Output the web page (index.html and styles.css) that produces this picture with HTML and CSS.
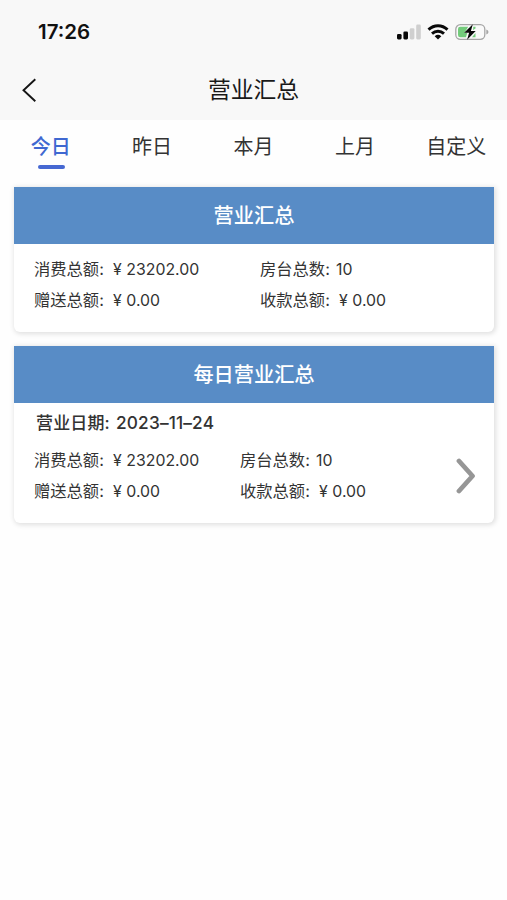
FILE: index.html
```html
<!DOCTYPE html>
<html lang="zh-CN">
<head>
<meta charset="utf-8">
<title>营业汇总</title>
<link rel="stylesheet" href="styles.css">
</head>
<body>
<header class="top">
  <div class="status">
    <span class="time">17:26</span>
    <div class="icons">
      <svg class="signal" width="24" height="16" viewBox="0 0 24 16"><g fill="#090909"><rect x="0" y="10" width="4.600" height="5.400" rx="1.300"/><rect x="6.400" y="7.400" width="4.600" height="8" rx="1.300"/></g><g fill="#cfcfcf"><rect x="12.800" y="4.200" width="4.600" height="11.200" rx="1.300"/><rect x="19.200" y="0.600" width="4.600" height="14.800" rx="1.300"/></g></svg>
      <svg class="wifi" width="22" height="16" viewBox="0 0 22 16" fill="none" stroke="#090909" stroke-width="2.900"><path d="M1.500 5.600C7 .4 15 .4 20.500 5.600"/><path d="M5 9.600C8.500 6.400 13.500 6.400 17 9.600"/><path d="M7.700 12.200Q11 9.500 14.300 12.200L11 15.600Z" fill="#090909" stroke="none"/></svg>
      <svg class="battery" width="34" height="18" viewBox="0 0 34 18"><rect x=".8" y="1.700" width="29" height="14.600" rx="4.500" fill="#fafafa" stroke="#a6a6a6" stroke-width="1.300"/><path d="M5.300 3.700H13.200L9.500 10H12.200L11 14.300H5.300Q3 14.300 3 12V6Q3 3.700 5.300 3.700Z" fill="#73cb7b"/><path d="M18.300 3.700H20.500V5.500L18 7ZM17 14.300L20.500 10V14.300Z" fill="#73cb7b"/><path d="M17.800 1.300L9.200 9.800H14.100L12.100 16.700L20.700 7.900H15.900Z" fill="#090909"/><path d="M31.300 6.500Q33.500 7.200 33.500 9T31.300 11.500Z" fill="#a6a6a6"/></svg>
    </div>
  </div>
  <div class="nav">
    <svg class="back" width="16" height="24" viewBox="0 0 16 24" fill="none" stroke="#151515" stroke-width="1.900"><path d="M13.300 1.300L1.500 12.300L13.300 23.300"/></svg>
    <h1>营业汇总</h1>
  </div>
</header>
<nav class="tabs">
  <a class="tab active">今日</a><a class="tab">昨日</a><a class="tab">本月</a><a class="tab">上月</a><a class="tab">自定义</a>
</nav>
<main>
  <section class="card">
    <h2>营业汇总</h2>
    <div class="grid">
      <div class="row"><span class="label">消费总额:</span><span class="yen">¥</span><span>23202.00</span></div>
      <div class="row"><span class="label">房台总数:</span><span class="count">10</span></div>
      <div class="row"><span class="label">赠送总额:</span><span class="yen">¥</span><span>0.00</span></div>
      <div class="row"><span class="label">收款总额:</span><span class="yen">¥</span><span>0.00</span></div>
    </div>
  </section>
  <section class="card daily">
    <h2>每日营业汇总</h2>
    <div class="date"><span class="date-label">营业日期:</span><span>2023–11–24</span></div>
    <div class="detail">
      <div class="grid">
        <div class="row"><span class="label">消费总额:</span><span class="yen">¥</span><span>23202.00</span></div>
        <div class="row"><span class="label">房台总数:</span><span class="count">10</span></div>
        <div class="row"><span class="label">赠送总额:</span><span class="yen">¥</span><span>0.00</span></div>
        <div class="row"><span class="label">收款总额:</span><span class="yen">¥</span><span>0.00</span></div>
      </div>
      <svg class="more" width="20" height="36" viewBox="0 0 20 36" fill="none" stroke="#969696" stroke-width="4.800" stroke-linecap="round" stroke-linejoin="round"><path d="M3 3L16.500 18L3 33"/></svg>
    </div>
  </section>
</main>
</body>
</html>
```
FILE: styles.css
```css
* { box-sizing: border-box; }
body { margin: 0; background: #fefefe; color: #333; font-family: Inter, "Noto Sans CJK SC", sans-serif; }
h1, h2 { margin: 0; }
svg { display: block; flex: none; }
.top { height: 120px; background: #f8f8f8; }
.status { height: 60px; padding: 4px 18px 0 38px; display: flex; align-items: center; justify-content: space-between; }
.time { font-size: 20.500px; font-weight: 600; color: #111; line-height: 24px; }
.icons { display: flex; align-items: center; }
.wifi { margin-left: 6px; }
.battery { margin-left: 6px; }
.nav { height: 60px; display: grid; grid-template-columns: 60px 1fr 60px; align-items: center; }
.back { margin-left: 22px; }
h1 { font-size: 22.800px; font-weight: 400; line-height: 32px; color: #191919; text-align: center; }
.tabs { display: flex; height: 67px; }
.tab { flex: 1; display: flex; flex-direction: column; align-items: center; padding-top: 12px; font-size: 20px; line-height: 30px; color: #333; }
.active { color: #3f68d1; font-weight: 500; }
.active::after { content: ""; width: 27px; height: 4px; margin: 3px 0 0 1px; border-radius: 2px; background: #4668d2; }
main { padding: 0 13px 0 14px; }
.card { height: 145px; margin-bottom: 14px; background: #fff; border-radius: 0 0 6px 6px; box-shadow: 1px 1px 5px 1px rgba(0, 0, 0, .12); }
.daily { height: 177px; }
h2 { height: 57px; background: #588cc6; color: #fff; text-align: center; font-size: 20.200px; font-weight: 500; line-height: 58px; }
.grid { display: grid; grid-template-columns: 226px 1fr; grid-auto-rows: 31px; padding: 10px 0 0 20px; }
.row { display: flex; align-items: center; font-size: 15.850px; line-height: 31px; white-space: nowrap; }
.label { width: 79px; font-size: 16.300px; }
.yen { width: 13.300px; }
.count { margin-left: -3px; }
.date { display: flex; height: 38px; padding-left: 22px; font-size: 17.300px; font-weight: 500; line-height: 40px; letter-spacing: .15px; }
.date-label { width: 80px; font-size: 17px; }
.detail { display: flex; align-items: center; justify-content: space-between; padding-right: 18px; }
.daily .grid { grid-template-columns: 206px 1fr; padding-top: 4px; }
.more { margin-top: 3px; }
```
